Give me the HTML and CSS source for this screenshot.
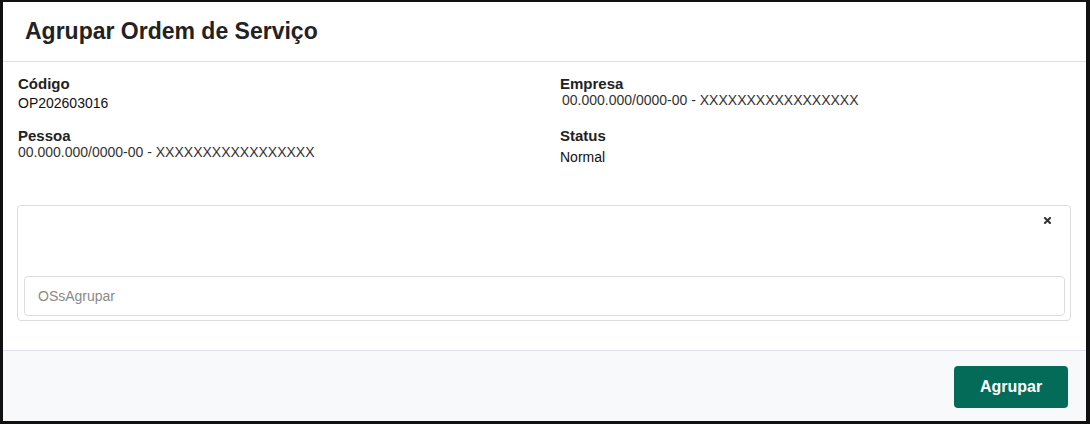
FILE: index.html
```html
<!DOCTYPE html>
<html lang="pt-BR">
<head>
    <meta charset="UTF-8">
    <meta name="viewport" content="width=device-width, initial-scale=1.0">
    <title>Agrupar Ordem de Serviço</title>
    <link rel="stylesheet" href="styles.css">
</head>
<body>

<div class="modal">
    <div class="modal-header">
        <h1>Agrupar Ordem de Serviço</h1>
    </div>

    <div class="modal-body">
        <div class="info-grid">
            <div class="info-item">
                <div class="info-label">Código</div>
                <div class="info-value">OP202603016</div>
            </div>
            <div class="info-item">
                <div class="info-label">Empresa</div>
                <div class="info-doc indent">00.000.000/0000-00 - XXXXXXXXXXXXXXXXX</div>
            </div>
            <div class="info-item">
                <div class="info-label">Pessoa</div>
                <div class="info-doc">00.000.000/0000-00 - XXXXXXXXXXXXXXXXX</div>
            </div>
            <div class="info-item">
                <div class="info-label">Status</div>
                <div class="info-value status">Normal</div>
            </div>
        </div>

        <!-- lista de OSs a agrupar -->
        <div class="group-box">
            <div class="group-top">
                <button class="clear-btn" title="Limpar">
                    <svg width="7" height="7" viewBox="0 0 7 7">
                        <path d="M1 1 L6 6 M6 1 L1 6" stroke="#333" stroke-width="2" stroke-linecap="square"/>
                    </svg>
                </button>
            </div>
            <input type="text" class="group-input" placeholder="OSsAgrupar">
        </div>
    </div>

    <div class="modal-footer">
        <button class="btn-primary">Agrupar</button>
    </div>
</div>

</body>
</html>
```

FILE: styles.css
```css
html, body {
    height: 100%;
}
body {
    margin: 0;
    background-color: #111;
    font-family: "Liberation Sans", Arial, sans-serif;
    color: #212529;
}
.modal {
    box-sizing: border-box;
    height: 100%;
    border-style: solid;
    border-color: #111;
    border-width: 2px 4px 3px 3px;
    background-color: #fff;
    display: flex;
    flex-direction: column;
}
.modal-header {
    height: 59px;
    padding: 0 22px;
    display: flex;
    align-items: center;
    border-bottom: 1px solid #dee2e6;
}
.modal-header h1 {
    margin: 0;
    font-size: 23px;
    font-weight: bold;
    color: #222;
}
.modal-body {
    flex: 1;
    padding: 13px 15px 0 14px;
}
.info-grid {
    display: grid;
    grid-template-columns: 542px 1fr;
    row-gap: 14px;
    padding-left: 1px;
}
.info-label {
    font-size: 15px;
    font-weight: bold;
    line-height: 18px;
    color: #222;
}
.info-value {
    font-size: 14px;
    line-height: 20px;
    color: #111;
}
.info-value.status {
    margin-top: 2px;
}
.info-doc {
    font-size: 14px;
    line-height: 14px;
    color: #333;
}
.info-doc.indent {
    margin-left: 2px;
}
.group-box {
    box-sizing: border-box;
    margin-top: 38px;
    height: 116px;
    border: 1px solid #dcdcdc;
    border-radius: 4px;
    padding: 0 5px 4px 6px;
    display: flex;
    flex-direction: column;
    justify-content: space-between;
}
.group-top {
    display: flex;
    justify-content: flex-end;
    padding: 11px 14px 0 0;
}
.clear-btn {
    border: none;
    background: none;
    padding: 0;
    width: 7px;
    height: 7px;
    display: flex;
    cursor: pointer;
}
.group-input {
    box-sizing: border-box;
    width: 100%;
    height: 40px;
    border: 1px solid #dcdcdc;
    border-radius: 4px;
    padding: 0 13px;
    font-family: "Liberation Sans", Arial, sans-serif;
    font-size: 14px;
    outline: none;
}
.group-input::placeholder {
    color: #8a8a8a;
}
.modal-footer {
    box-sizing: border-box;
    height: 71px;
    border-top: 1px solid #dee2e6;
    background-color: #f8f9fa;
    display: flex;
    justify-content: flex-end;
    align-items: flex-start;
    padding: 15px 18px 0 0;
}
.btn-primary {
    width: 114px;
    height: 42px;
    border: none;
    border-radius: 4px;
    background-color: #056b59;
    color: #fff;
    font-family: "Liberation Sans", Arial, sans-serif;
    font-size: 16px;
    font-weight: bold;
    cursor: pointer;
}
```
